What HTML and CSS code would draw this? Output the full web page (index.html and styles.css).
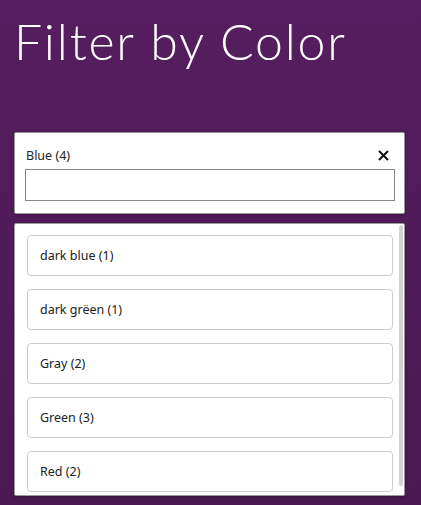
FILE: index.html
```html
<!DOCTYPE html>
<html lang="en">
<head>
    <meta charset="UTF-8">
    <meta name="viewport" content="width=device-width, initial-scale=1.0">
    <title>Filter by Color</title>
    <link rel="stylesheet" href="styles.css">
</head>
<body>
    <div class="page">
        <h1 class="title">Filter by Color</h1>

        <div class="filter-card">
            <div class="filter-head">
                <span class="filter-label">Blue (4)</span>
                <button class="clear-btn" aria-label="Clear">
                    <svg width="11" height="11" viewBox="0 0 11 11">
                        <path d="M1 1 L10 10 M10 1 L1 10" stroke="#111" stroke-width="2" fill="none"/>
                    </svg>
                </button>
            </div>
            <input class="filter-input" type="text">
        </div>

        <div class="option-list">
            <div class="options">
                <div class="option">dark blue (1)</div>
                <div class="option">dark grëen (1)</div>
                <div class="option">Gray (2)</div>
                <div class="option">Green (3)</div>
                <div class="option">Red (2)</div>
            </div>
            <div class="scrollbar"><div class="scroll-thumb"></div></div>
        </div>
    </div>
</body>
</html>
```

FILE: styles.css
```css
html, body {
    margin: 0;
    height: 100%;
}
body {
    background: linear-gradient(#561e60, #4a1852);
    font-family: "Noto Sans", sans-serif;
    font-size: 12.5px;
    color: #222;
}
.page {
    padding: 0 16px 0 14px;
}
.title {
    margin: 0;
    padding-top: 11px;
    height: 132px;
    box-sizing: border-box;
    font-family: Lato, sans-serif;
    font-weight: 300;
    font-size: 50px;
    letter-spacing: 1.8px;
    line-height: 60px;
    color: #fff;
}
.filter-card {
    background: #fff;
    border: 1px solid #999;
    border-radius: 2px;
    box-shadow: 0 1px 3px rgba(0, 0, 0, 0.3);
    padding: 12px 9px 12px 10px;
}
.filter-head {
    display: flex;
    align-items: center;
    justify-content: space-between;
    height: 20px;
    margin-bottom: 4px;
}
.filter-label {
    padding-left: 1px;
}
.clear-btn {
    background: none;
    border: none;
    padding: 0;
    margin-right: 6px;
    display: flex;
    cursor: pointer;
}
.filter-input {
    display: block;
    box-sizing: border-box;
    width: 100%;
    height: 32px;
    border: 1px solid #888;
    border-radius: 0;
    margin: 0;
}
.option-list {
    box-sizing: border-box;
    margin-top: 9px;
    height: 273px;
    display: flex;
    background: #fff;
    border: 1px solid #999;
    border-radius: 2px;
    box-shadow: 0 1px 3px rgba(0, 0, 0, 0.3);
}
.options {
    flex: 1;
    overflow: hidden;
    padding: 11px 5px 0 12px;
    display: flex;
    flex-direction: column;
    gap: 13px;
}
.scrollbar {
    width: 4px;
    padding: 1px 1px 0 1px;
}
.scroll-thumb {
    height: 261px;
    background: #d2d2d2;
    border-radius: 2px;
}
.option {
    flex: none;
    box-sizing: border-box;
    height: 41px;
    border: 1px solid #ccc;
    border-radius: 4px;
    padding: 0 12px;
    display: flex;
    align-items: center;
}
```
